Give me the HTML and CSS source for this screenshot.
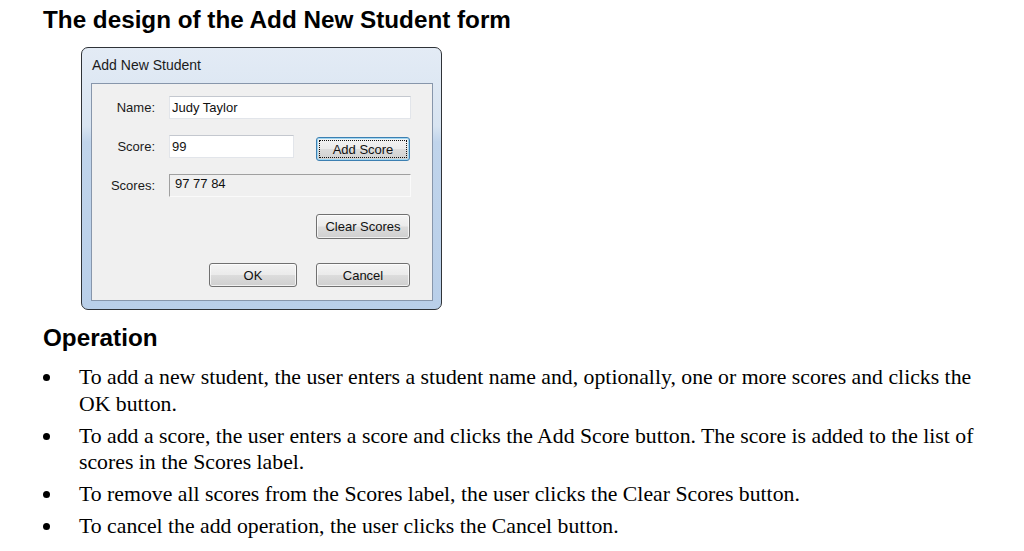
FILE: index.html
```html
<!DOCTYPE html>
<html lang="en">
<head>
<meta charset="UTF-8">
<title>Add New Student form</title>
<link rel="stylesheet" href="styles.css">
</head>
<body>

<div class="page">
    <h1 class="heading">The design of the Add New Student form</h1>

    <div class="window">
        <div class="window-title">Add New Student</div>
        <div class="client">
            <div class="row">
                <label class="field-label">Name:</label>
                <input class="textbox textbox-wide" type="text" value="Judy Taylor">
            </div>
            <div class="row row-score">
                <label class="field-label">Score:</label>
                <input class="textbox textbox-short" type="text" value="99">
                <button class="win-button focused">Add Score</button>
            </div>
            <div class="row row-scores">
                <label class="field-label">Scores:</label>
                <div class="scores-label">97 77 84</div>
            </div>
            <div class="row row-clear">
                <button class="win-button">Clear Scores</button>
            </div>
            <div class="row row-actions">
                <button class="win-button ok-button">OK</button>
                <button class="win-button">Cancel</button>
            </div>
        </div>
    </div>

    <h2 class="heading">Operation</h2>

    <div class="ops">
        <div class="op">
            <span class="bullet"></span>
            <p>To add a new student, the user enters a student name and, optionally, one or more scores and clicks the OK button.</p>
        </div>
        <div class="op">
            <span class="bullet"></span>
            <p>To add a score, the user enters a score and clicks the Add Score button. The score is added to the list of scores in the Scores label.</p>
        </div>
        <div class="op">
            <span class="bullet"></span>
            <p>To remove all scores from the Scores label, the user clicks the Clear Scores button.</p>
        </div>
        <div class="op">
            <span class="bullet"></span>
            <p>To cancel the add operation, the user clicks the Cancel button.</p>
        </div>
    </div>
</div>

</body>
</html>
```

FILE: styles.css
```css
/* Pagina */
body {
    margin: 0;
    background-color: #fff;
    color: #000;
}

.page {
    padding: 6px 0 0 43px;
}

.heading {
    margin: 0;
    font-family: "Liberation Sans", Arial, sans-serif;
    font-size: 24.25px;
    font-weight: bold;
    line-height: 28px;
}

h2.heading {
    margin-top: 14px;
}

/* Janela do formulario */
.window {
    box-sizing: border-box;
    width: 361px;
    height: 263px;
    margin: 13px 0 0 38px;
    padding: 0 8px 8px 9px;
    border: 1px solid #2f3338;
    border-radius: 7px;
    background: linear-gradient(180deg, #e3ebf5 0%, #d8e4f1 30%, #c0d4eb 36%, #b9cfe9 100%);
}

.window-title {
    height: 35px;
    line-height: 35px;
    padding-left: 1px;
    font-family: "Liberation Sans", Arial, sans-serif;
    font-size: 14px;
    color: #1b1b1b;
}

.client {
    box-sizing: border-box;
    height: 218px;
    padding: 12px 21px 0 0;
    border: 1px solid #8796ab;
    background-color: #f0f0f0;
    font-family: "Liberation Sans", Arial, sans-serif;
    font-size: 13px;
    color: #1a1a1a;
}

.row {
    display: flex;
    align-items: flex-start;
}

.row-score {
    margin-top: 16px;
}

.row-scores {
    margin-top: 13px;
}

.row-clear {
    margin-top: 17px;
    justify-content: flex-end;
}

.row-actions {
    margin-top: 24px;
    justify-content: flex-end;
    gap: 19px;
}

.field-label {
    width: 63px;
    margin-right: 14px;
    text-align: right;
    line-height: 23px;
}

.textbox {
    box-sizing: border-box;
    height: 23px;
    margin: 0;
    padding: 0 2px;
    border: 1px solid #e2e5ea;
    border-top-color: #c4c8cf;
    background-color: #fff;
    font-family: "Liberation Sans", Arial, sans-serif;
    font-size: 13px;
    color: #111;
}

.textbox-wide {
    flex: 1;
}

.textbox-short {
    width: 125px;
    margin-right: 22px;
}

.scores-label {
    box-sizing: border-box;
    flex: 1;
    height: 23px;
    padding: 1px 0 0 5px;
    border: 1px solid;
    border-color: #a0a0a0 #fafafa #fafafa #a0a0a0;
    line-height: 15px;
    color: #111;
}

/* Botoes estilo Windows 7 */
.win-button {
    box-sizing: border-box;
    width: 94px;
    height: 24px;
    margin: 0 1px 0 0;
    padding: 0;
    border: 1px solid #707070;
    border-radius: 3px;
    background: linear-gradient(180deg, #f4f4f4 0%, #ebebeb 48%, #dcdcdc 52%, #cfcfcf 100%);
    box-shadow: inset 0 0 0 1px rgba(255, 255, 255, 0.7);
    font-family: "Liberation Sans", Arial, sans-serif;
    font-size: 13px;
    color: #111;
}

.row-score .win-button {
    margin-top: 2px;
}

.row-clear .win-button {
    height: 25px;
}

.ok-button {
    width: 88px;
    margin-right: 0;
}

.win-button.focused {
    border-color: #3c7fb1;
    box-shadow: inset 0 0 0 1px #9fd6f2;
    outline: 1px dotted #111;
    outline-offset: -4px;
}

/* Lista de operacoes */
.ops {
    margin-top: 12px;
    font-family: "Liberation Serif", "Times New Roman", serif;
    font-size: 21.75px;
    line-height: 26.5px;
}

.op {
    display: flex;
    margin-bottom: 5.5px;
}

.bullet {
    flex: none;
    width: 36px;
    height: 26.5px;
    display: flex;
    align-items: center;
}

.bullet::after {
    content: "";
    width: 7px;
    height: 7px;
    margin: 1px 0 0 0;
    border-radius: 50%;
    background-color: #000;
}

.op p {
    margin: 0;
    width: 905px;
}
```
